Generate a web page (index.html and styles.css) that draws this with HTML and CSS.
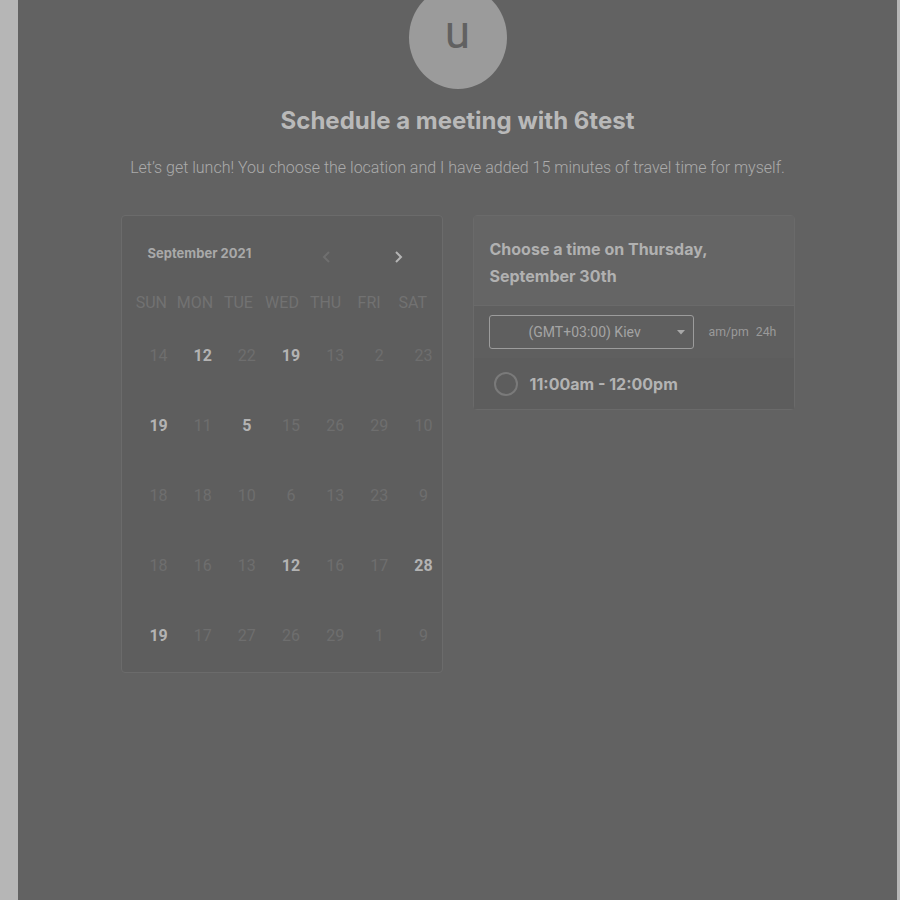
FILE: index.html
```html
<!DOCTYPE html>
<html>
<head>
<meta charset="utf-8">
<link rel="stylesheet" href="styles.css">
</head>
<body>
<div class="page">
  <div class="side-left"></div>
  <main class="main">
    <div class="avatar">u</div>
    <h1 class="title">Schedule a meeting with 6test</h1>
    <p class="subtitle">Let’s get lunch! You choose the location and I have added 15 minutes of travel time for myself.</p>
    <div class="cards">
      <section class="calendar">
        <div class="cal-head">
          <span class="month">September 2021</span>
          <div class="arrows">
            <svg class="arrow dim" width="12" height="14" viewBox="0 0 12 14"><path d="M8 2 L3 7 L8 12" fill="none" stroke="currentColor" stroke-width="2"/></svg>
            <svg class="arrow" width="12" height="14" viewBox="0 0 12 14"><path d="M4 2 L9 7 L4 12" fill="none" stroke="currentColor" stroke-width="2"/></svg>
          </div>
        </div>
        <div class="grid weekdays">
          <span>SUN</span><span>MON</span><span>TUE</span><span>WED</span><span>THU</span><span>FRI</span><span>SAT</span>
        </div>
        <div class="grid days">
          <span>14</span><span class="on">12</span><span>22</span><span class="on">19</span><span>13</span><span>2</span><span>23</span>
          <span class="on">19</span><span>11</span><span class="on">5</span><span>15</span><span>26</span><span>29</span><span>10</span>
          <span>18</span><span>18</span><span>10</span><span>6</span><span>13</span><span>23</span><span>9</span>
          <span>18</span><span>16</span><span>13</span><span class="on">12</span><span>16</span><span>17</span><span class="on">28</span>
          <span class="on">19</span><span>17</span><span>27</span><span>26</span><span>29</span><span>1</span><span>9</span>
        </div>
      </section>
      <section class="times">
        <div class="times-head">Choose a time on Thursday,<br>September 30th</div>
        <div class="tz-row">
          <div class="select">
            <span>(GMT+03:00) Kiev</span>
            <svg class="caret" width="8" height="5" viewBox="0 0 8 5"><path d="M0 0 L8 0 L4 4.5 Z" fill="currentColor"/></svg>
          </div>
          <div class="fmt"><span>am/pm</span><span>24h</span></div>
        </div>
        <div class="slot">
          <span class="radio"></span>
          <span class="slot-text">11:00am - 12:00pm</span>
        </div>
      </section>
    </div>
  </main>
  <div class="side-right"></div>
</div>
</body>
</html>
```

FILE: styles.css
```css
html, body {
  margin: 0;
  padding: 0;
  height: 100%;
  background: #626262;
  overflow: hidden;
}
.page {
  display: flex;
  height: 900px;
}
.side-left {
  width: 18px;
  background: #b6b6b6;
  flex: none;
}
.side-right {
  width: 3px;
  background: #b6b6b6;
  flex: none;
}
.main {
  flex: 1;
  background: #626262;
  display: flex;
  flex-direction: column;
  align-items: center;
  font-family: Roboto, "Liberation Sans", sans-serif;
}
.avatar {
  width: 98px;
  height: 103px;
  margin-top: -14px;
  border-radius: 50%;
  background: #9b9b9b;
  color: #616161;
  font-family: Roboto, sans-serif;
  font-size: 46px;
  line-height: 92px;
  text-align: center;
}
.title {
  margin: 17px 0 0;
  font-family: Inter, sans-serif;
  font-weight: 700;
  font-size: 24px;
  letter-spacing: 0;
  line-height: 30px;
  color: #b9b9b9;
}
.subtitle {
  margin: 21px 0 0;
  font-family: Roboto, sans-serif;
  font-weight: 300;
  font-size: 16px;
  line-height: 22px;
  color: #ababab;
}
.cards {
  display: flex;
  gap: 30px;
  margin-top: 36px;
  align-items: flex-start;
}
.calendar {
  width: 320px;
  height: 456px;
  border: 1px solid #6b6b6b;
  border-radius: 4px;
  background: #5e5e5e;
  box-sizing: content-box;
}
.cal-head {
  display: flex;
  align-items: center;
  justify-content: space-between;
  padding: 28px 38px 0 26px;
  height: 18px;
}
.month {
  font-family: Inter, sans-serif;
  font-weight: 700;
  font-size: 13px;
  color: #a9a9a9;
}
.arrows {
  display: flex;
  gap: 59px;
  margin-top: 8px;
}
.arrow { color: #b5b5b5; }
.arrow.dim { color: #6f6f6f; }
.grid {
  display: grid;
  grid-template-columns: repeat(7, 1fr);
  text-align: center;
}
.weekdays {
  padding: 0 7px 0 8px;
  margin-top: 31px;
  font-size: 16px;
  line-height: 20px;
  color: #727272;
}
.days {
  padding: 0 0 0 15px;
  margin: 33px -4px 0 0;
  grid-auto-rows: 70px;
  font-size: 16px;
  line-height: 20px;
  color: #6e6e6e;
  font-weight: 400;
}
.days span.on {
  color: #b3b3b3;
  font-weight: 700;
}
.times {
  width: 320px;
  border: 1px solid #6a6a6a;
  border-radius: 4px;
  background: #5f5f5f;
  box-sizing: content-box;
}
.times-head {
  background: #656565;
  padding: 20px 16px 15px;
  font-family: Inter, sans-serif;
  font-weight: 700;
  font-size: 16px;
  line-height: 27px;
  color: #b1b1b1;
  border-bottom: 1px solid #6a6a6a;
}
.tz-row {
  display: flex;
  align-items: center;
  padding: 9px 16px 0 15px;
  gap: 15px;
}
.select {
  width: 205px;
  height: 34px;
  border: 1px solid #9c9c9c;
  border-radius: 3px;
  display: flex;
  align-items: center;
  justify-content: space-between;
  padding: 0 8px 0 39px;
  box-sizing: border-box;
  font-size: 14px;
  color: #a4a4a4;
}
.caret { color: #a8a8a8; }
.fmt {
  display: flex;
  gap: 7px;
  font-size: 12.3px;
  color: #9a9a9a;
}
.slot {
  display: flex;
  align-items: center;
  gap: 12px;
  height: 51px;
  margin-top: 9px;
  padding: 0 16px 0 20px;
  background: #5d5d5d;
}
.radio {
  width: 20px;
  height: 20px;
  border: 2px solid #7a7a7a;
  border-radius: 50%;
}
.slot-text {
  font-family: Inter, sans-serif;
  font-weight: 700;
  font-size: 16px;
  color: #b3b3b3;
}
```
